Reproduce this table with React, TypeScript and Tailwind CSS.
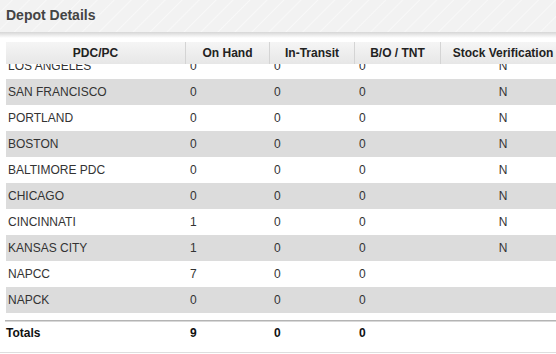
import React from "react";

const rows: [string, string, string, string, string][] = [
  ["LOS ANGELES", "0", "0", "0", "N"],
  ["SAN FRANCISCO", "0", "0", "0", "N"],
  ["PORTLAND", "0", "0", "0", "N"],
  ["BOSTON", "0", "0", "0", "N"],
  ["BALTIMORE PDC", "0", "0", "0", "N"],
  ["CHICAGO", "0", "0", "0", "N"],
  ["CINCINNATI", "1", "0", "0", "N"],
  ["KANSAS CITY", "1", "0", "0", "N"],
  ["NAPCC", "7", "0", "0", ""],
  ["NAPCK", "0", "0", "0", ""],
];

export default function App() {
  return (
    <div
      className="w-[556px] h-[354px] overflow-hidden bg-white flex flex-col"
      style={{ fontFamily: '"Liberation Sans", Arial, sans-serif' }}
    >
      <div className="h-[32px] shrink-0 flex items-center pl-[6px] bg-[#f2f2f2] bg-[repeating-linear-gradient(-45deg,#f2f2f2_0px,#f2f2f2_10px,#f8f8f8_11px,#f2f2f2_12px)]">
        <span className="text-[14px] font-bold text-[#444] leading-none -mt-[2px]">Depot Details</span>
      </div>
      <div className="h-[6px] shrink-0 bg-gradient-to-b from-[#d6d6d6] to-white" />
      <div className="h-[4px] shrink-0" />
      <div className="ml-[6px] w-[560px] shrink-0 flex flex-col">
        <div className="h-[22px] flex text-[12px] font-bold text-[#222] bg-gradient-to-b from-[#f5f5f5] to-[#e7e7e7]">
          <div className="w-[180px] flex items-center justify-center border-r border-[#d4d4d4]">PDC/PC</div>
          <div className="w-[84px] flex items-center justify-center border-r border-[#d4d4d4]">On Hand</div>
          <div className="w-[85px] flex items-center justify-center border-r border-[#d4d4d4]">In-Transit</div>
          <div className="w-[86px] flex items-center justify-center border-r border-[#d4d4d4]">B/O / TNT</div>
          <div className="w-[124px] flex items-center justify-center">Stock Verification</div>
        </div>
        <div className="h-[250px] overflow-hidden">
          <div className="-mt-[11px] flex flex-col">
            {rows.map((r, i) => (
              <div
                key={r[0]}
                className={`h-[26px] flex items-center text-[12px] text-[#333] ${i % 2 === 1 ? "bg-[#dcdcdc]" : "bg-white"}`}
              >
                <div className="w-[180px] pl-[2px]">{r[0]}</div>
                <div className="w-[84px] pl-[4px]">{r[1]}</div>
                <div className="w-[85px] pl-[4px]">{r[2]}</div>
                <div className="w-[86px] pl-[4px]">{r[3]}</div>
                <div className="w-[124px] text-center">{r[4]}</div>
              </div>
            ))}
          </div>
        </div>
      </div>
      <div className="h-[6px] shrink-0" />
      <div className="ml-[5px] h-[2px] shrink-0 bg-[#b4b4b4] border-b border-[#d8d8d8]" />
      <div className="ml-[6px] h-[30px] shrink-0 flex items-start pt-[3px] text-[12px] leading-[16px] font-bold text-[#111]">
        <div className="w-[180px]">Totals</div>
        <div className="w-[84px] pl-[4px]">9</div>
        <div className="w-[85px] pl-[4px]">0</div>
        <div className="w-[86px] pl-[4px]">0</div>
      </div>
      <div className="h-[1px] shrink-0 bg-[#dedede]" />
    </div>
  );
}
